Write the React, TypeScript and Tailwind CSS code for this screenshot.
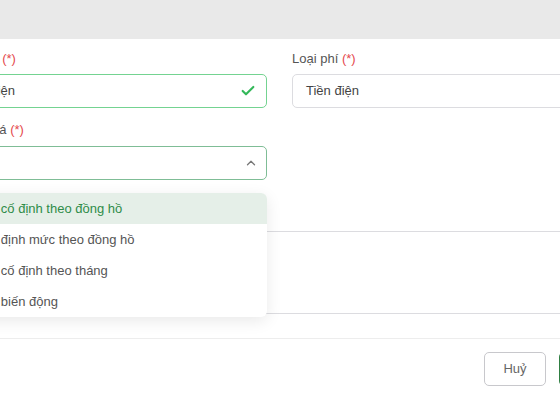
import { Check, ChevronUp } from "lucide-react";

const options = [
  "Giá cố định theo đồng hồ",
  "Giá định mức theo đồng hồ",
  "Giá cố định theo tháng",
  "Giá biến động",
];

function Label({ text }: { text: string }) {
  return (
    <label className="block h-5 leading-5 text-[13px] text-[#555]">
      {text} <span className="text-[#e5484d]">(*)</span>
    </label>
  );
}

export default function App() {
  return (
    <div className="w-[560px] h-[400px] overflow-hidden bg-white font-['Liberation_Sans',Arial,sans-serif]">
      <div className="h-[39px] bg-[#e9e9e9]" />
      <div className="-ml-[72px] w-[703px]">
        <div className="px-5 pt-[10px] pb-6">
          <div className="grid grid-cols-[319px_319px] gap-x-[25px]">
            <div>
              <Label text="Tên mục" />
              <div className="mt-[5px] h-[34px] rounded-[5px] border border-[#74d391] flex items-center pl-[13px] pr-[10px]">
                <span className="flex-1 text-[13px] text-[#444]">Tiền điện</span>
                <Check className="w-[16px] h-[16px] text-[#34b85a]" strokeWidth={3.2} />
              </div>
            </div>
            <div>
              <Label text="Loại phí" />
              <div className="mt-[5px] h-[34px] rounded-[5px] border border-[#dcdce0] flex items-center pl-[13px]">
                <span className="text-[13px] text-[#444]">Tiền điện</span>
              </div>
            </div>

            <div className="mt-3">
              <Label text="Khung giá" />
              <div className="relative mt-[6px]">
                <div className="h-[34px] rounded-[5px] border border-[#7fbd96] flex items-center justify-end pr-[8px]">
                  <ChevronUp className="w-[14px] h-[14px] text-[#777]" strokeWidth={2.2} />
                </div>
                <ul className="absolute left-0 right-0 top-[47px] z-10 rounded-[6px] bg-white overflow-hidden shadow-[0_4px_16px_rgba(0,0,0,0.09)]">
                  {options.map((o, i) => (
                    <li
                      key={o}
                      className={
                        i === 0
                          ? "h-[31px] leading-[31px] pl-[29px] text-[13px] bg-[#e5efe8] text-[#2f8c48]"
                          : "h-[31px] leading-[31px] pl-[29px] text-[13px] text-[#555]"
                      }
                    >
                      {o}
                    </li>
                  ))}
                </ul>
              </div>
            </div>
            <div />

            <div className="col-span-2 mt-[26px]">
              <label className="block h-5 leading-5 text-[13px] text-[#555]">Ghi chú</label>
              <textarea className="mt-[5px] block w-full h-[83px] rounded-[5px] border border-[#dcdce0] resize-none outline-none" />
            </div>
          </div>
        </div>
        <div className="border-t border-[#ededed] pt-[13px] pr-[10px] flex justify-end gap-[13px]">
          <button className="w-[62px] h-[34px] rounded-[5px] border border-[#c8c8cc] text-[13px] text-[#666]">
            Huỷ
          </button>
          <button className="w-[62px] h-[34px] rounded-[5px] bg-[#2f7f42] text-[13px] text-white">
            Lưu
          </button>
        </div>
      </div>
    </div>
  );
}
